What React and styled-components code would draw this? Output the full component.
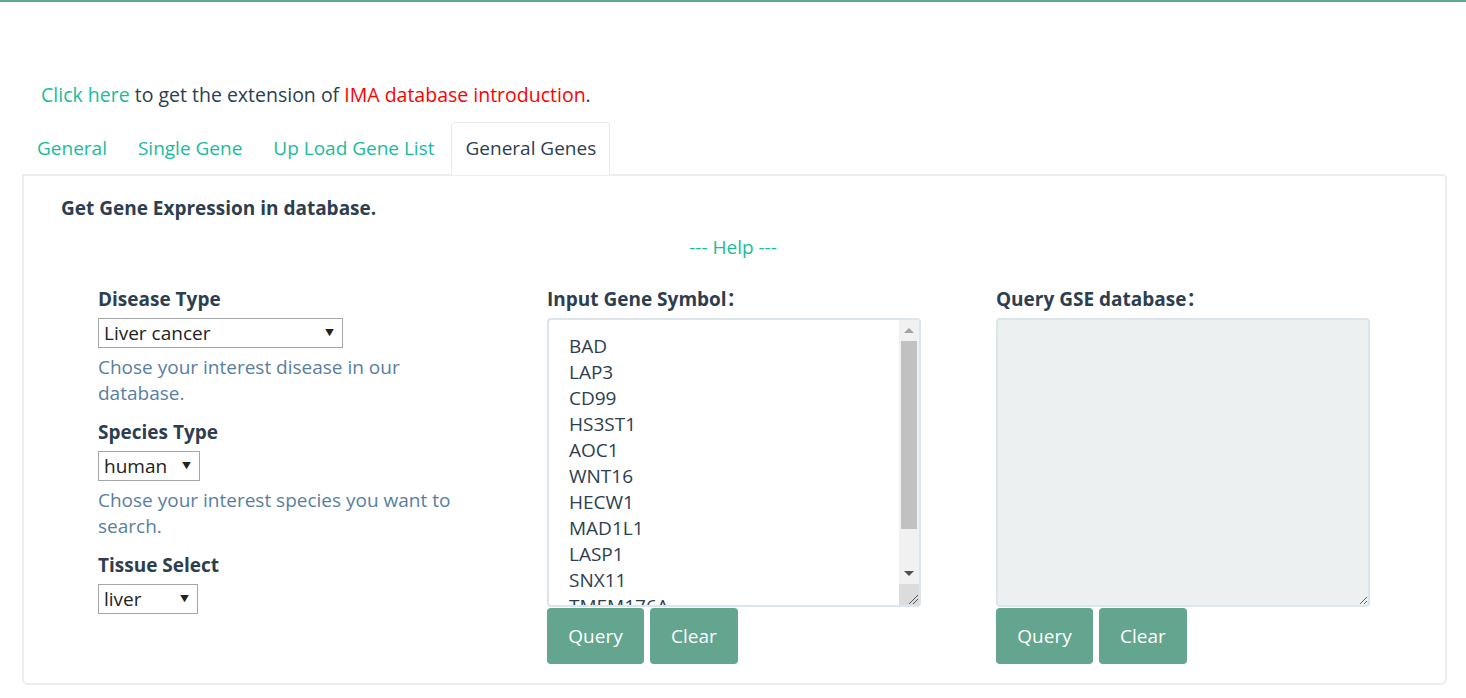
import React from "react";
import styled, { createGlobalStyle } from "styled-components";

const GlobalStyle = createGlobalStyle`
  html, body {
    margin: 0;
    padding: 0;
    background: #ffffff;
  }
  body {
    font-family: "Open Sans", "Noto Sans CJK SC", sans-serif;
    color: #2c3e50;
  }
`;

const TopLine = styled.div`
  height: 2px;
  background: #5fa88e;
`;

const Page = styled.div`
  padding: 0 19px 0 22px;
`;

const Intro = styled.p`
  margin: 0;
  padding: 80px 0 0 19px;
  font-size: 19.5px;
  line-height: 26px;
  color: #2c3e50;
`;

const Link = styled.a`
  color: ${({ $red }) => ($red ? "#ff0000" : "#18bc9c")};
  text-decoration: none;
`;

const Tabs = styled.ul`
  display: flex;
  list-style: none;
  margin: 14px 0 0;
  padding: 0;
  height: 53px;
`;

const Tab = styled.li`
  display: flex;
  align-items: center;
  padding: 0 13px 2px 14px;
  font-size: 19px;
  color: ${({ $active }) => ($active ? "#2c3e50" : "#18bc9c")};
  background: ${({ $active }) => ($active ? "#ffffff" : "transparent")};
  border: 1px solid ${({ $active }) => ($active ? "#e6eaea" : "transparent")};
  border-bottom: none;
  border-radius: 4px 4px 0 0;
  margin-right: 2px;
  position: relative;
  z-index: 1;
`;

const Panel = styled.div`
  border: 2px solid #eaeeee;
  border-radius: 0 4px 6px 6px;
  margin-top: -1px;
  padding: 20px 0 18px 37px;
  height: 511px;
  box-sizing: border-box;
`;

const Heading = styled.h4`
  margin: 0;
  font-size: 19px;
  font-weight: 700;
  line-height: 24px;
`;

const Help = styled.div`
  text-align: center;
  color: #18bc9c;
  font-size: 19px;
  margin: 15px 0 28px;
  line-height: 24px;
  padding-right: 40px;
`;

const Columns = styled.div`
  display: grid;
  grid-template-columns: repeat(3, 449px);
  padding-left: 37px;
`;

const Column = styled.div`
  display: flex;
  flex-direction: column;
  align-items: flex-start;
`;

const Label = styled.label`
  font-size: 19px;
  font-weight: 700;
  line-height: 24px;
  margin-bottom: 7px;
`;

const SelectWrap = styled.div`
  position: relative;
  width: ${({ $w }) => $w}px;
  &::after {
    content: "▼";
    position: absolute;
    right: 9px;
    top: 8px;
    font-size: 9px;
    color: #222;
    pointer-events: none;
  }
`;

const Select = styled.select`
  appearance: none;
  width: 100%;
  height: 30px;
  border: 1px solid #a6a6a6;
  border-radius: 0;
  background: #fff;
  font-family: inherit;
  font-size: 19px;
  color: #222;
  padding: 0 0 0 5px;
  box-sizing: border-box;
`;

const HelpText = styled.p`
  margin: 6px 0 14px;
  width: 370px;
  font-size: 19px;
  line-height: 26px;
  color: #597ea2;
`;

const AreaWrap = styled.div`
  position: relative;
  width: 374px;
  height: 289px;
`;

const TextArea = styled.textarea`
  display: block;
  width: 374px;
  height: 289px;
  box-sizing: border-box;
  border: 2px solid #dce4ec;
  border-radius: 4px;
  padding: 13px 40px 14px 20px;
  font-family: inherit;
  font-size: 19px;
  line-height: 26px;
  color: #2c3e50;
  background: ${({ disabled }) => (disabled ? "#ecf0f1" : "#ffffff")};
  resize: both;
  outline: none;
  overflow: hidden;
`;

const ScrollBar = styled.div`
  position: absolute;
  top: 2px;
  right: 2px;
  bottom: 2px;
  width: 20px;
  display: flex;
  flex-direction: column;
  background: #f1f1f1;
`;

const ScrollButton = styled.div`
  height: 21px;
  display: flex;
  align-items: center;
  justify-content: center;
  &::before {
    content: "";
    border-left: 5px solid transparent;
    border-right: 5px solid transparent;
    ${({ $down }) =>
      $down
        ? "border-top: 5px solid #505050;"
        : "border-bottom: 5px solid #a3a3a3;"}
  }
`;

const Track = styled.div`
  flex: 1;
  padding: 0 2px;
`;

const Thumb = styled.div`
  height: 188px;
  background: #c1c1c1;
`;

const Corner = styled.div`
  height: 21px;
  background: #dcdcdc;
  display: flex;
  align-items: flex-end;
  justify-content: flex-end;
`;

const Buttons = styled.div`
  display: flex;
  gap: 6px;
  margin-top: 1px;
`;

const Button = styled.button`
  width: ${({ $w }) => $w}px;
  height: 56px;
  border: none;
  border-radius: 4px;
  background: #63a58f;
  color: #ffffff;
  font-family: inherit;
  font-size: 19px;
  cursor: pointer;
`;

const genes = [
  "BAD",
  "LAP3",
  "CD99",
  "HS3ST1",
  "AOC1",
  "WNT16",
  "HECW1",
  "MAD1L1",
  "LASP1",
  "SNX11",
  "TMEM176A",
  "M6PR",
  "KDM1A",
  "RPAP3",
];

const Grip = () => (
  <svg width="12" height="12" viewBox="0 0 12 12">
    <path d="M2 11 L11 2 M6 11 L11 6" stroke="#555" strokeWidth="1" fill="none" />
  </svg>
);

export default function App() {
  return (
    <>
      <GlobalStyle />
      <TopLine />
      <Page>
        <Intro>
          <Link href="#">Click here</Link> to get the extension of{" "}
          <Link href="#" $red>
            IMA database introduction
          </Link>
          .
        </Intro>
        <Tabs>
          <Tab>General</Tab>
          <Tab>Single Gene</Tab>
          <Tab>Up Load Gene List</Tab>
          <Tab $active>General Genes</Tab>
        </Tabs>
        <Panel>
          <Heading>Get Gene Expression in database.</Heading>
          <Help>--- Help ---</Help>
          <Columns>
            <Column>
              <Label>Disease Type</Label>
              <SelectWrap $w={245}>
                <Select defaultValue="liver">
                  <option value="liver">Liver cancer</option>
                </Select>
              </SelectWrap>
              <HelpText>Chose your interest disease in our database.</HelpText>
              <Label>Species Type</Label>
              <SelectWrap $w={102}>
                <Select defaultValue="human">
                  <option value="human">human</option>
                </Select>
              </SelectWrap>
              <HelpText>Chose your interest species you want to search.</HelpText>
              <Label>Tissue Select</Label>
              <SelectWrap $w={100}>
                <Select defaultValue="liver">
                  <option value="liver">liver</option>
                </Select>
              </SelectWrap>
            </Column>
            <Column>
              <Label>Input Gene Symbol：</Label>
              <AreaWrap>
                <TextArea defaultValue={genes.join("\n")} />
                <ScrollBar>
                  <ScrollButton />
                  <Track>
                    <Thumb />
                  </Track>
                  <ScrollButton $down />
                  <Corner>
                    <Grip />
                  </Corner>
                </ScrollBar>
              </AreaWrap>
              <Buttons>
                <Button $w={97}>Query</Button>
                <Button $w={88}>Clear</Button>
              </Buttons>
            </Column>
            <Column>
              <Label>Query GSE database：</Label>
              <AreaWrap>
                <TextArea disabled defaultValue="" />
              </AreaWrap>
              <Buttons>
                <Button $w={97}>Query</Button>
                <Button $w={88}>Clear</Button>
              </Buttons>
            </Column>
          </Columns>
        </Panel>
      </Page>
    </>
  );
}
